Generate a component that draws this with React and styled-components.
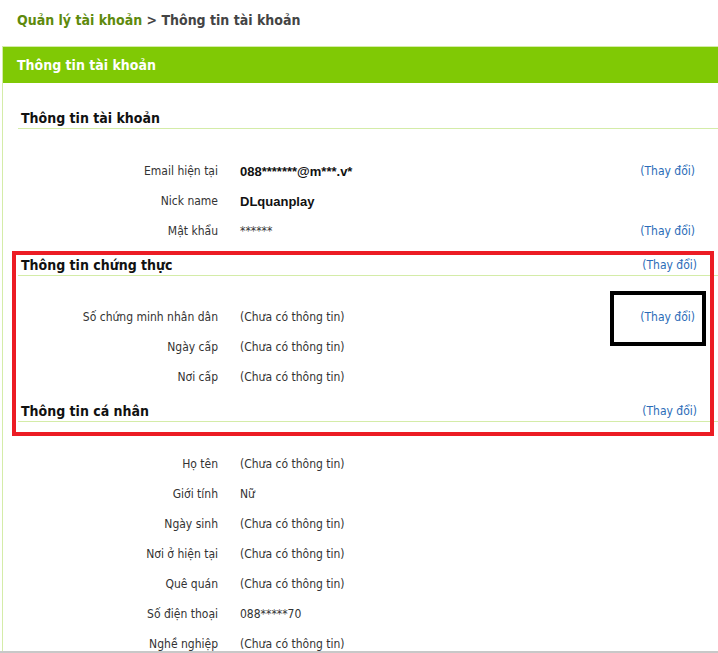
import React from "react";
import styled, { createGlobalStyle } from "styled-components";

const GlobalStyle = createGlobalStyle`
  body {
    margin: 0;
    background: #fff;
    font-family: "DejaVu Sans Condensed", "DejaVu Sans", Verdana, sans-serif;
  }
`;

const accountRows = [
  { label: "Email hiện tại", value: "088*******@m***.v*", strong: true, change: true },
  { label: "Nick name", value: "DLquanplay", strong: true },
  { label: "Mật khẩu", value: "******", change: true },
];

const verifyRows = [
  { label: "Số chứng minh nhân dân", value: "(Chưa có thông tin)", change: true },
  { label: "Ngày cấp", value: "(Chưa có thông tin)" },
  { label: "Nơi cấp", value: "(Chưa có thông tin)" },
];

const personalRows = [
  { label: "Họ tên", value: "(Chưa có thông tin)" },
  { label: "Giới tính", value: "Nữ" },
  { label: "Ngày sinh", value: "(Chưa có thông tin)" },
  { label: "Nơi ở hiện tại", value: "(Chưa có thông tin)" },
  { label: "Quê quán", value: "(Chưa có thông tin)" },
  { label: "Số điện thoại", value: "088*****70" },
  { label: "Nghề nghiệp", value: "(Chưa có thông tin)" },
];

const Section = ({ title, rows, change, first, gap = 27 }) => (
  <div>
    <SectionHead first={first}>
      <SectionTitle>{title}</SectionTitle>
      {change && <ChangeLink>(Thay đổi)</ChangeLink>}
    </SectionHead>
    <Rows gap={gap}>
      {rows.map((r) => (
        <Row key={r.label}>
          <Label>{r.label}</Label>
          <Value strong={r.strong}>{r.value}</Value>
          {r.change ? <ChangeLink>(Thay đổi)</ChangeLink> : <span />}
        </Row>
      ))}
    </Rows>
  </div>
);

const App = () => {
  return (
    <Page>
      <GlobalStyle />
      <Breadcrumb>
        <Crumb>Quản lý tài khoản</Crumb> &gt; Thông tin tài khoản
      </Breadcrumb>
      <Panel>
        <PanelHeader>Thông tin tài khoản</PanelHeader>
        <PanelBody>
          <Section title="Thông tin tài khoản" rows={accountRows} first />
          <Section title="Thông tin chứng thực" rows={verifyRows} change gap={26} />
          <Section title="Thông tin cá nhân" rows={personalRows} change gap={27} />
        </PanelBody>
      </Panel>
      <RedMark />
      <BlackMark />
    </Page>
  );
};

export default App;

const Page = styled.div`
  position: relative;
  height: 651px;
  overflow: hidden;
  border-bottom: 2px solid #c8c8c8;
`;

const Breadcrumb = styled.div`
  padding: 12px 0 0 17px;
  height: 46px;
  box-sizing: border-box;
  font-size: 14px;
  font-weight: 700;
  color: #444;
`;

const Crumb = styled.span`
  color: #5e8a0c;
`;

const Panel = styled.div`
  margin-left: 2px;
  border-left: 1px solid #d4eca8;
  border-top: 1px solid #d4eca8;
`;

const PanelHeader = styled.div`
  height: 36px;
  background: #80c905;
  color: #fff;
  font-size: 14px;
  font-weight: 700;
  display: flex;
  align-items: center;
  padding-left: 14px;
`;

const PanelBody = styled.div`
  padding-left: 15px;
`;

const SectionHead = styled.div`
  display: flex;
  justify-content: space-between;
  align-items: center;
  height: 20px;
  margin-top: ${(p) => (p.first ? "25px" : "9px")};
  padding: 0 21px 0 3px;
  border-bottom: 1px solid #d4eca8;
`;

const SectionTitle = styled.div`
  font-size: 14px;
  font-weight: 700;
  color: #111;
`;

const Rows = styled.div`
  margin-top: ${(p) => p.gap}px;
`;

const Row = styled.div`
  display: grid;
  grid-template-columns: 200px 1fr auto;
  column-gap: 22px;
  align-items: center;
  height: 30px;
  padding-right: 23px;
  font-size: 12px;
  color: #333;
`;

const Label = styled.div`
  text-align: right;
`;

const Value = styled.div`
  font-family: ${(p) => (p.strong ? '"Liberation Sans", Arial, sans-serif' : "inherit")};
  font-weight: ${(p) => (p.strong ? 700 : 400)};
  font-size: ${(p) => (p.strong ? "13px" : "12px")};
  color: ${(p) => (p.strong ? "#111" : "#333")};
`;

const ChangeLink = styled.span`
  font-size: 12px;
  font-weight: 400;
  color: #2b6cb8;
  cursor: pointer;
`;

const RedMark = styled.div`
  position: absolute;
  left: 12px;
  top: 251px;
  width: 702px;
  height: 185px;
  box-sizing: border-box;
  border: 4px solid #ec1c24;
  pointer-events: none;
`;

const BlackMark = styled.div`
  position: absolute;
  left: 610px;
  top: 291px;
  width: 96px;
  height: 55px;
  box-sizing: border-box;
  border: 4px solid #000;
  pointer-events: none;
`;
